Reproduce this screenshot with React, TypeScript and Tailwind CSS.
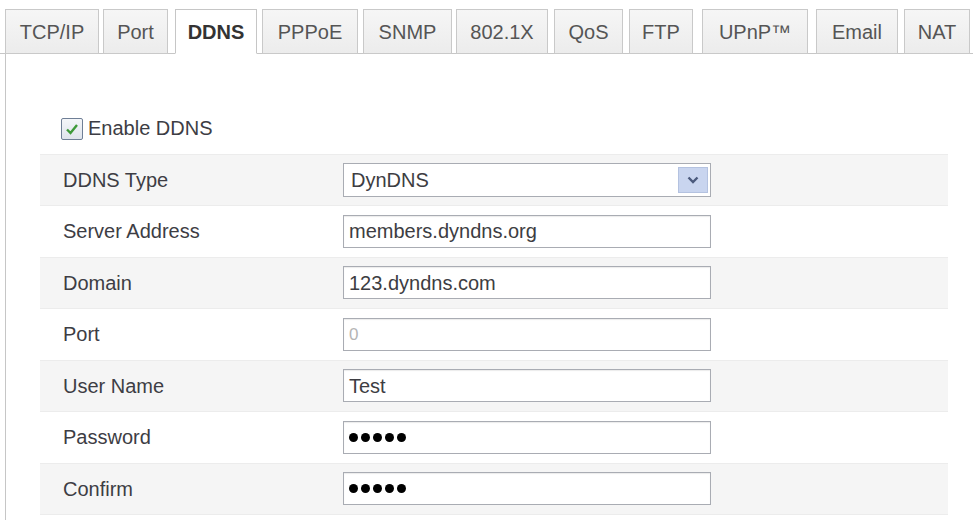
import React from 'react'

const tabs = [
  { label: 'TCP/IP', cls: 'w-[94px]' },
  { label: 'Port', cls: 'ml-[4px] w-[65px]' },
  { label: 'DDNS', cls: 'ml-[7px] w-[82px]', active: true },
  { label: 'PPPoE', cls: 'ml-[5px] w-[96px]' },
  { label: 'SNMP', cls: 'ml-[5px] w-[89px]' },
  { label: '802.1X', cls: 'ml-[4px] w-[92px]' },
  { label: 'QoS', cls: 'ml-[6px] w-[69px]' },
  { label: 'FTP', cls: 'ml-[6px] w-[64px]' },
  { label: 'UPnP™', cls: 'ml-[9px] w-[106px]' },
  { label: 'Email', cls: 'ml-[8px] w-[82px]' },
  { label: 'NAT', cls: 'ml-[6px] w-[66px]' },
]

function Dots() {
  return (
    <div className="flex items-center gap-[3px]">
      {[0, 1, 2, 3, 4].map((i) => (
        <span key={i} className="block w-[9px] h-[9px] rounded-full bg-black" />
      ))}
    </div>
  )
}

function TextBox({ children }: { children?: React.ReactNode }) {
  return (
    <div className="w-[368px] h-[33px] flex items-center pl-[5px] bg-white border border-[#a9acb3] shadow-[inset_0_1px_1px_rgba(0,0,0,0.08)] text-[#3d3d42]">
      {children}
    </div>
  )
}

function SelectBox({ value }: { value: string }) {
  return (
    <div className="relative w-[368px] h-[34px] flex items-center pl-[7px] bg-white border border-[#a9acb3] text-[#3d3d42]">
      {value}
      <div className="absolute right-[2px] top-[3px] bottom-[3px] w-[30px] flex items-center justify-center bg-[#c9d5ef] border border-[#b4c2e0]">
        <svg width="12" height="8" viewBox="0 0 12 8">
          <path d="M1.5 1.5 L6 6 L10.5 1.5" fill="none" stroke="#4b5a7d" strokeWidth="2.4" />
        </svg>
      </div>
    </div>
  )
}

function Row({ label, gray, children }: { label: string; gray?: boolean; children: React.ReactNode }) {
  return (
    <div
      className={
        gray
          ? 'h-[51.5px] flex items-center bg-[#f5f5f5] border-y border-[#ececec]'
          : 'h-[51.5px] flex items-center border-y border-transparent'
      }
    >
      <div className="w-[303px] pl-[23px] text-[#3d3d44]">{label}</div>
      {children}
    </div>
  )
}

export default function App() {
  return (
    <div className="w-[973px] h-[520px] bg-white overflow-hidden text-[20px] font-['Liberation_Sans',Arial,sans-serif]">
      <div className="flex pl-[5px] pt-[9px] border-b border-[#c6c6c6]">
        {tabs.map((t) => (
          <div
            key={t.label}
            className={
              t.active
                ? `${t.cls} h-[45px] -mb-px flex items-center justify-center bg-white border border-[#c6c6c6] border-b-white font-bold text-[#333]`
                : `${t.cls} h-[45px] -mb-px flex items-center justify-center bg-gradient-to-b from-[#f6f6f6] to-[#ececec] border border-[#c9c9c9] text-[#555]`
            }
          >
            {t.label}
          </div>
        ))}
      </div>

      <div className="ml-[5px] h-[470px] pt-[64px] flex flex-col border-l border-[#c6c6c6]">
        <div className="ml-[55px] flex items-center gap-[5px] h-[22px]">
          <div className="w-[22px] h-[22px] flex items-center justify-center rounded-[2px] border border-[#6f7f96] bg-gradient-to-b from-[#f4f6f9] to-[#dfe4ec]">
            <svg width="14" height="12" viewBox="0 0 14 12">
              <path d="M2 6.5 L5.5 10 L12 2" fill="none" stroke="#3e9a3a" strokeWidth="2.4" />
            </svg>
          </div>
          <span className="text-[#3d3d44] -mt-[3px]">Enable DDNS</span>
        </div>

        <div className="mt-[14px] ml-[34px] w-[908px]">
          <Row label="DDNS Type" gray>
            <SelectBox value="DynDNS" />
          </Row>
          <Row label="Server Address">
            <TextBox>members.dyndns.org</TextBox>
          </Row>
          <Row label="Domain" gray>
            <TextBox>123.dyndns.com</TextBox>
          </Row>
          <Row label="Port">
            <TextBox>
              <span className="text-[#b5b5b5] text-[17px]">0</span>
            </TextBox>
          </Row>
          <Row label="User Name" gray>
            <TextBox>Test</TextBox>
          </Row>
          <Row label="Password">
            <TextBox>
              <Dots />
            </TextBox>
          </Row>
          <Row label="Confirm" gray>
            <TextBox>
              <Dots />
            </TextBox>
          </Row>
        </div>
      </div>
    </div>
  )
}
